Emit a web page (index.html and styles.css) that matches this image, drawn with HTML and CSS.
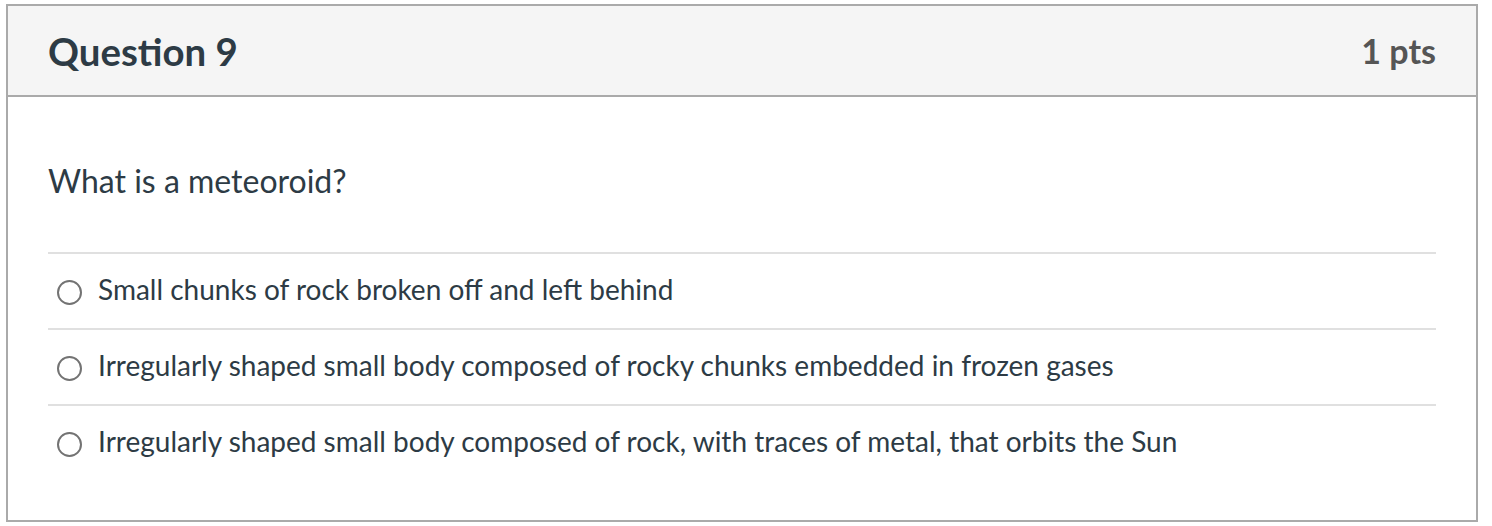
FILE: index.html
```html
<!DOCTYPE html>
<html>
<head>
<meta charset="utf-8">
<link rel="stylesheet" href="styles.css">
</head>
<body>
<div class="question">
  <div class="header">
    <h2 class="title">Question 9</h2>
    <span class="pts">1 pts</span>
  </div>
  <div class="content">
    <p class="text">What is a meteoroid?</p>
    <div class="answers">
      <label class="answer"><span class="radio"></span><span class="label">Small chunks of rock broken off and left behind</span></label>
      <label class="answer"><span class="radio"></span><span class="label">Irregularly shaped small body composed of rocky chunks embedded in frozen gases</span></label>
      <label class="answer"><span class="radio"></span><span class="label">Irregularly shaped small body composed of rock, with traces of metal, that orbits the Sun</span></label>
    </div>
  </div>
</div>
</body>
</html>
```

FILE: styles.css
```css
html, body {
  margin: 0;
  padding: 0;
  background: #fff;
}
body {
  padding: 4px 14px 0 6px;
  font-family: Lato, "Open Sans", sans-serif;
  color: #2d3b45;
}
.question {
  border: 2px solid #aaaaaa;
  width: 1472px;
  box-sizing: border-box;
  height: 518px;
}
.header {
  background: #f5f5f5;
  border-bottom: 2px solid #aaaaaa;
  height: 91px;
  box-sizing: border-box;
  display: flex;
  align-items: center;
  justify-content: space-between;
  padding: 0 40px 0 40px;
}
.title {
  margin: 0;
  font-size: 38.4px;
  font-weight: 700;
  color: #2d3b45;
}
.pts {
  font-size: 34px;
  font-weight: 700;
  color: #555555;
}
.content {
  padding: 0 40px;
}
.text {
  margin: 0;
  padding-top: 64px;
  height: 91px;
  font-size: 32px;
  line-height: 40px;
  box-sizing: content-box;
}
.answers {
  display: flex;
  flex-direction: column;
}
.answer {
  display: flex;
  align-items: center;
  gap: 16px;
  height: 76px;
  border-top: 2px solid #e0e0e0;
  box-sizing: border-box;
  padding-left: 9px;
  padding-bottom: 4px;
  font-size: 28px;
}
.radio {
  width: 25px;
  height: 25px;
  border: 2px solid #737373;
  border-radius: 50%;
  box-sizing: border-box;
  flex: none;
  margin-top: 6px;
}
```
